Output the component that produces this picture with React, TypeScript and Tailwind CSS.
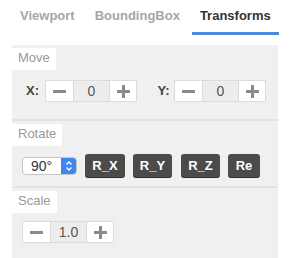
import React from "react";

function Minus() {
  return <div className="w-[13px] h-[3px] bg-[#8a8a8a]" />;
}

function Plus() {
  return (
    <div className="relative w-[13px] h-[13px]">
      <div className="absolute left-0 top-[5px] w-[13px] h-[3px] bg-[#8a8a8a]" />
      <div className="absolute top-0 left-[5px] w-[3px] h-[13px] bg-[#8a8a8a]" />
    </div>
  );
}

function Stepper({ value }: { value: string }) {
  return (
    <div className="flex h-[22px] border border-[#dcdcdc] bg-white">
      <button className="w-[27px] flex items-center justify-center bg-white">
        <Minus />
      </button>
      <div className="w-[37px] flex items-center justify-center bg-[#ededed] border-x border-[#dcdcdc] text-[14px] text-[#555]">
        {value}
      </div>
      <button className="w-[26px] flex items-center justify-center bg-white">
        <Plus />
      </button>
    </div>
  );
}

function Label({ text }: { text: string }) {
  return (
    <div className="inline-block h-[22px] px-[6px] bg-white text-[13px] leading-[20px] text-[#9a9a9a]">
      {text}
    </div>
  );
}

function DarkButton({ text, w, ml }: { text: string; w: string; ml: string }) {
  return (
    <button
      className={`${w} ${ml} h-[23px] rounded-[3px] bg-[#4b4b4b] shadow-[0_1px_0_#2e2e2e] text-white text-[13px] font-bold`}
    >
      {text}
    </button>
  );
}

export default function App() {
  const tabs = ["Viewport", "BoundingBox", "Transforms"];
  return (
    <div className="w-[290px] h-[258px] bg-white font-['Liberation_Sans',Arial,sans-serif]">
      <div className="ml-[12px] w-[266px]">
        {/* Tabs */}
        <div className="flex gap-1 h-[35px]">
          {tabs.map((t) => {
            const active = t === "Transforms";
            return (
              <div
                key={t}
                className={
                  active
                    ? "flex items-center px-2 flex-1 justify-center border-b-[3px] border-[#4a8bdc] text-[13px] font-bold text-[#333]"
                    : "flex items-center px-2 border-b-[3px] border-transparent text-[13px] font-bold text-[#a6a6a6]"
                }
              >
                {t}
              </div>
            );
          })}
        </div>

        <div className="mt-[10px]">
          {/* Move */}
          <div className="bg-[#f0f0f0] border-b-2 border-[#e3e3e3]">
            <Label text="Move" />
            <div className="flex items-center pt-[10px] pb-[17px] pl-[8px]">
              <span className="w-[25px] text-center text-[13px] font-bold text-[#444]">X:</span>
              <Stepper value="0" />
              <span className="ml-[16px] w-[21px] text-center text-[13px] font-bold text-[#444]">Y:</span>
              <Stepper value="0" />
            </div>
          </div>

          {/* Rotate */}
          <div className="bg-[#f0f0f0] border-b-2 border-[#e3e3e3]">
            <Label text="Rotate" />
            <div className="flex items-center pt-[8px] pb-[9px] pl-[10px]">
              <div className="flex w-[55px] h-[18px] rounded-[4px] border border-[#c6c6c6] bg-white overflow-hidden">
                <div className="flex-1 pl-[8px] text-[14px] leading-[16px] text-[#333]">90°</div>
                <div className="w-[15px] bg-[#3d87f5] flex items-center justify-center">
                  <svg width="8" height="12" viewBox="0 0 8 12" fill="none" stroke="white" strokeWidth="1.3">
                    <path d="M1.5 4.5 L4 2 L6.5 4.5" />
                    <path d="M1.5 7.5 L4 10 L6.5 7.5" />
                  </svg>
                </div>
              </div>
              <DarkButton text="R_X" w="w-[40px]" ml="ml-[8px]" />
              <DarkButton text="R_Y" w="w-[39px]" ml="ml-[8px]" />
              <DarkButton text="R_Z" w="w-[39px]" ml="ml-[9px]" />
              <DarkButton text="Re" w="w-[32px]" ml="ml-[8px]" />
            </div>
          </div>

          {/* Scale */}
          <div className="bg-[#f0f0f0] border-b-2 border-[#e3e3e3]">
            <Label text="Scale" />
            <div className="flex items-center pt-[8px] pb-[16px] pl-[10px]">
              <Stepper value="1.0" />
            </div>
          </div>
        </div>
      </div>
    </div>
  );
}
